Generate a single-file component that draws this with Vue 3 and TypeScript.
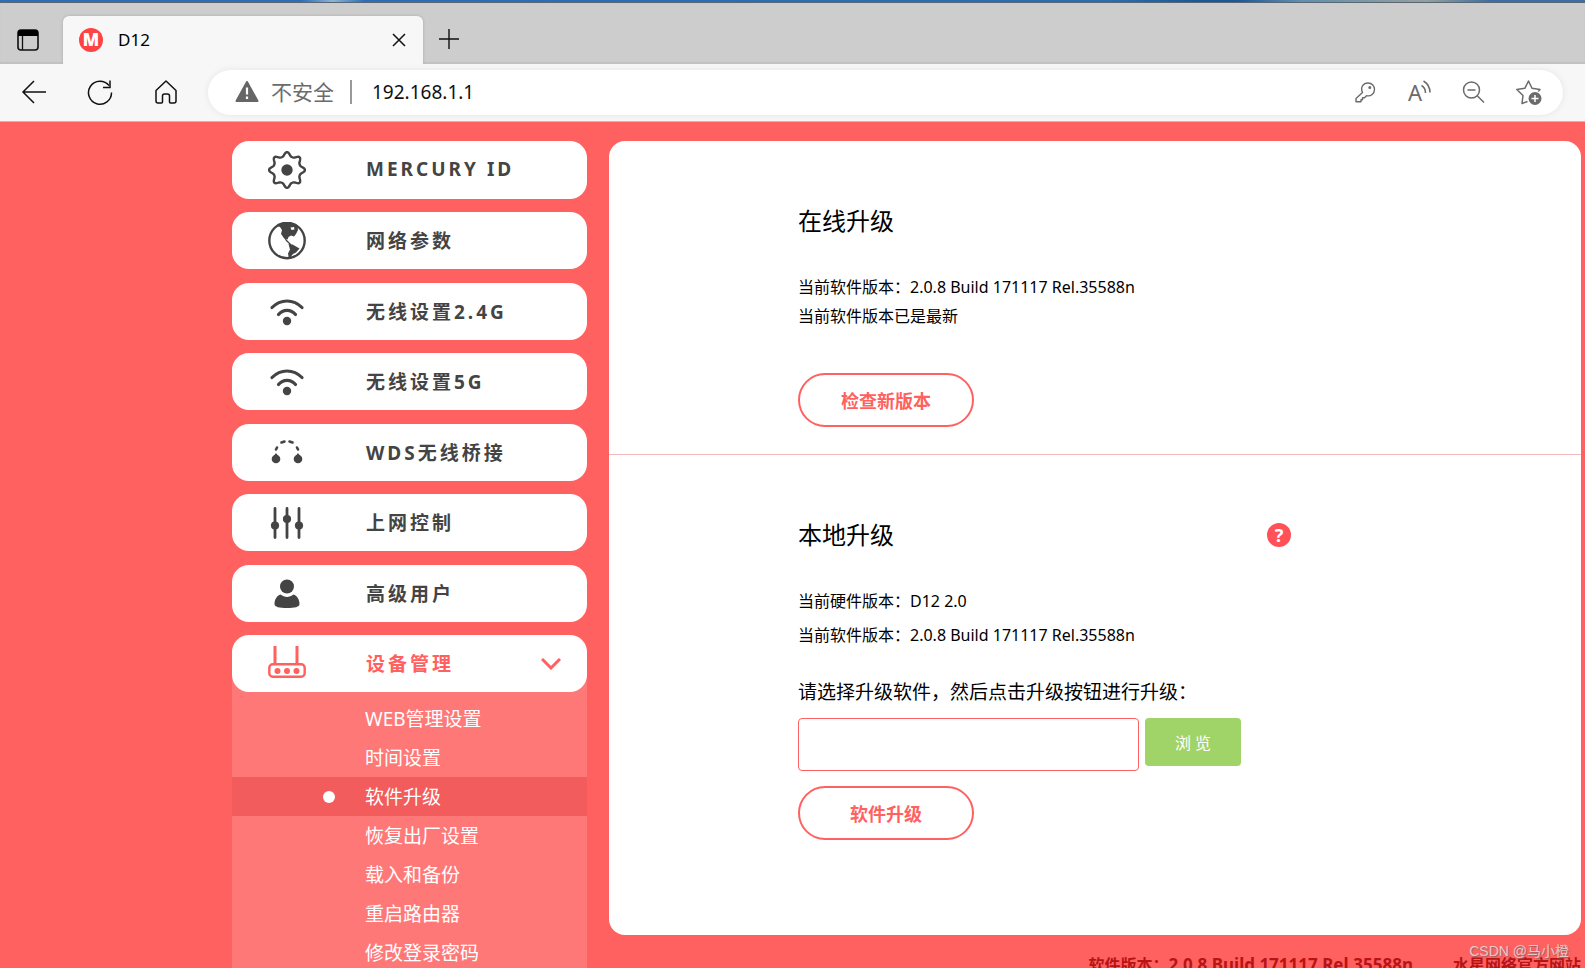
<script setup lang="ts">
import { ref } from 'vue'

type IconName = 'gear' | 'globe' | 'wifi' | 'bridge' | 'sliders' | 'user' | 'router'

interface MenuEntry {
  icon: IconName
  label: string
}

const menu: MenuEntry[] = [
  { icon: 'gear', label: 'MERCURY ID' },
  { icon: 'globe', label: '网络参数' },
  { icon: 'wifi', label: '无线设置2.4G' },
  { icon: 'wifi', label: '无线设置5G' },
  { icon: 'bridge', label: 'WDS无线桥接' },
  { icon: 'sliders', label: '上网控制' },
  { icon: 'user', label: '高级用户' },
  { icon: 'router', label: '设备管理' },
]
const activeMenu = '设备管理'

const submenu: string[] = [
  'WEB管理设置',
  '时间设置',
  '软件升级',
  '恢复出厂设置',
  '载入和备份',
  '重启路由器',
  '修改登录密码',
]
const activeSub = ref('软件升级')

const url = ref('192.168.1.1')
const filePath = ref('')
const software = '2.0.8 Build 171117 Rel.35588n'
const hardware = 'D12 2.0'

// Outline of an eight-toothed gear centred in a 38 x 38 box.
function gearPath(): string {
  const points: string[] = []
  for (let i = 0; i < 160; i++) {
    const a = (i / 160) * Math.PI * 2
    const tooth = Math.pow((1 + Math.cos(8 * a)) / 2, 1.5)
    const r = 13.8 + 4.1 * tooth
    points.push(`${(19 + r * Math.cos(a)).toFixed(2)} ${(19 + r * Math.sin(a)).toFixed(2)}`)
  }
  return `M${points.join('L')}Z`
}
const gear = gearPath()
</script>

<template>
  <div class="window">
    <div class="desktop-strip"></div>
    <header class="browser">
      <div class="tabs">
        <button class="tab-actions" type="button" aria-label="标签页操作">
          <svg width="22" height="22" viewBox="0 0 22 22">
            <rect x="1" y="1" width="20" height="20" rx="3" fill="none" stroke="#111" stroke-width="1.6" />
            <path d="M1 7V4a3 3 0 0 1 3-3h14a3 3 0 0 1 3 3v3z" fill="#000" />
            <path d="M5.5 7v14" stroke="#111" stroke-width="1.3" />
          </svg>
        </button>
        <div class="tab">
          <svg class="favicon" width="24" height="24" viewBox="0 0 24 24">
            <circle cx="12" cy="12" r="12" fill="#ff4343" />
            <text x="12" y="18" text-anchor="middle" class="favicon-text">M</text>
          </svg>
          <span class="tab-title">D12</span>
          <button class="tab-close" type="button" aria-label="关闭">
            <svg width="14" height="14" viewBox="0 0 14 14">
              <path d="M1 1l12 12M13 1L1 13" stroke="#111" stroke-width="1.5" />
            </svg>
          </button>
        </div>
        <button class="tab-new" type="button" aria-label="新建标签页">
          <svg width="22" height="22" viewBox="0 0 22 22">
            <path d="M11 1v20M1 11h20" stroke="#111" stroke-width="1.4" />
          </svg>
        </button>
      </div>
      <div class="toolbar">
        <button type="button" class="tool" aria-label="后退">
          <svg width="26" height="26" viewBox="0 0 26 26" fill="none" stroke="#111" stroke-width="1.5">
            <path d="M25 12H2M13 1L2 12l11 11" />
          </svg>
        </button>
        <button type="button" class="tool" aria-label="刷新">
          <svg width="26" height="26" viewBox="0 0 26 26" fill="none" stroke="#111" stroke-width="1.5">
            <path d="M24.500 12.500A11.500 11.500 0 1 1 22 5.500" />
            <path d="M23 0.500v7h-7" />
          </svg>
        </button>
        <button type="button" class="tool" aria-label="主页">
          <svg width="26" height="26" viewBox="0 0 26 26" fill="none" stroke="#111" stroke-width="1.5" stroke-linejoin="round">
            <path d="M3 10.500L13 1l10 9.500V21a2 2 0 0 1-2 2h-3.500a1 1 0 0 1-1-1v-6a2 2 0 0 0-2-2h-3a2 2 0 0 0-2 2v6a1 1 0 0 1-1 1H5a2 2 0 0 1-2-2z" />
          </svg>
        </button>
        <div class="address">
          <svg width="24" height="22" viewBox="0 0 24 22">
            <path d="M12 1L22.500 20H1.500z" fill="#666" stroke="#666" stroke-width="2" stroke-linejoin="round" />
            <path d="M12 6.500v7M12 15.500v2.500" stroke="#fff" stroke-width="2.200" />
          </svg>
          <span class="insecure">不安全</span>
          <span class="bar"></span>
          <input v-model="url" class="url" type="text" aria-label="地址栏" />
          <div class="address-tools">
            <button type="button" aria-label="密码">
              <svg width="24" height="26" viewBox="0 0 24 26" fill="none" stroke="#6b6b6b" stroke-width="1.400" stroke-linejoin="round">
                <path d="M8.500 13.500C6 8 9.500 4 14 4 18 4 20.500 7 20.500 10.500c0 4-3.500 7.200-8 6.200l-2 2h-2v2H7v2H2v-3.200z" />
                <circle cx="15.800" cy="8.500" r="0.800" fill="#6b6b6b" />
              </svg>
            </button>
            <button type="button" aria-label="大声朗读">
              <svg width="24" height="26" viewBox="0 0 24 26" fill="none" stroke="#6b6b6b" stroke-width="1.500">
                <text x="0" y="22" class="read-text">A</text>
                <path d="M13.500 6.500c2.500 1.500 4 4.500 4 7.500M15.500 2c4 2.500 6.500 7 6.500 11.500" />
              </svg>
            </button>
            <button type="button" aria-label="缩小">
              <svg width="24" height="26" viewBox="0 0 24 26" fill="none" stroke="#6b6b6b" stroke-width="1.500">
                <circle cx="9.500" cy="11" r="8" />
                <path d="M5.500 11h8M15.500 17l6.500 6.500" />
              </svg>
            </button>
            <button type="button" aria-label="收藏">
              <svg width="26" height="26" viewBox="0 0 26 26" fill="none" stroke="#6b6b6b" stroke-width="1.500" stroke-linejoin="round">
                <path d="M11.500 22.500l-5.500 2 1-8L0.800 10.500l8-1.200 3.700-7.300 3.500 7.300 8 1.200-1.800 2" />
                <circle cx="19" cy="19.500" r="6.500" fill="#6b6b6b" stroke="none" />
                <path d="M19 16v7M15.500 19.500h7" stroke="#fff" />
              </svg>
            </button>
          </div>
        </div>
      </div>
    </header>

    <div class="page">
      <nav class="sidebar" aria-label="主菜单">
        <ul class="menu">
          <li v-for="entry in menu" :key="entry.label">
            <button type="button" class="menu-item" :class="{ active: entry.label === activeMenu }">
              <svg width="38" height="38" viewBox="0 0 38 38" fill="none" stroke="currentColor" stroke-width="2.400" stroke-linecap="round">
                <template v-if="entry.icon === 'gear'">
                  <path :d="gear" />
                  <circle cx="19" cy="19" r="5.700" fill="currentColor" stroke="none" />
                </template>
                <template v-else-if="entry.icon === 'globe'">
                  <circle cx="19" cy="18.500" r="17.700" />
                  <path
                    d="M8 3.500C14 0 24 0 29.500 3.500L30 8l-2 4-2 2.500-3-1-2.500 1.500-1 2.500L16 16l-3-4 1-4-2-3z"
                    fill="currentColor" stroke="none"
                  />
                  <path d="M22.500 5.500l3.500-0.500 0.500 2.500-3 0.500z" fill="#fff" stroke="none" />
                  <path d="M20.500 22l4 0.500 7 4-3.500 4-3 1.500-4 5-1-5.500 2-4z" fill="currentColor" stroke="none" />
                  <path d="M15.500 14l3 4.500 4 4" stroke-width="1.300" />
                </template>
                <template v-else-if="entry.icon === 'wifi'">
                  <path d="M4 14.500C12.500 5.800 25.500 5.800 34 14.500" stroke-width="3.200" />
                  <path d="M10.500 21.500c4.500-5.500 12.500-5.500 17 0" stroke-width="3.200" />
                  <circle cx="19" cy="28" r="4.200" fill="currentColor" stroke="none" />
                </template>
                <template v-else-if="entry.icon === 'bridge'">
                  <path d="M8 15.500l1-2M13.500 8.500l3-1M21.500 7.500l3 1M29 13.500l1 2" stroke-width="2.600" />
                  <circle cx="8" cy="25" r="4.300" fill="currentColor" stroke="none" />
                  <circle cx="30" cy="25" r="4.300" fill="currentColor" stroke="none" />
                  <path d="M8 20l3 4H5zM30 20l3 4h-6z" fill="currentColor" stroke-width="1.200" />
                </template>
                <template v-else-if="entry.icon === 'sliders'">
                  <path d="M7 4.500v29M19 4.500v29M31 4.500v29" stroke-width="2.800" />
                  <circle cx="7" cy="21.500" r="4.100" fill="currentColor" stroke="none" />
                  <circle cx="19" cy="15" r="4.100" fill="currentColor" stroke="none" />
                  <circle cx="31" cy="21.500" r="4.100" fill="currentColor" stroke="none" />
                </template>
                <template v-else-if="entry.icon === 'user'">
                  <circle cx="19" cy="11.500" r="7" fill="currentColor" stroke="none" />
                  <path
                    d="M12.500 19.500c4 3.200 9 3.200 13 0 3.500 1 6 5 6 9.500 0 3-5 4-12.500 4s-12.500-1-12.500-4c0-4.500 2.500-8.500 6-9.500z"
                    fill="currentColor" stroke="none"
                  />
                </template>
                <template v-else>
                  <path d="M7 18V1M29 18V1" stroke-width="3" stroke-linecap="butt" />
                  <rect x="1.300" y="19.300" width="35.400" height="12.400" rx="3.500" />
                  <g fill="currentColor" stroke="none">
                    <circle cx="9.500" cy="26" r="3" />
                    <circle cx="19" cy="26" r="3" />
                    <circle cx="28.500" cy="26" r="3" />
                  </g>
                </template>
              </svg>
              <span class="menu-label">{{ entry.label }}</span>
              <svg v-if="entry.label === activeMenu" width="20" height="12" viewBox="0 0 20 12" fill="none" stroke="currentColor" stroke-width="3">
                <path d="M1 1l9 9 9-9" />
              </svg>
            </button>
          </li>
        </ul>
        <ul class="submenu">
          <li v-for="name in submenu" :key="name">
            <a href="#" :class="{ current: name === activeSub }" @click.prevent="activeSub = name">
              <span class="marker"></span>
              <span class="sub-label">{{ name }}</span>
            </a>
          </li>
        </ul>
      </nav>

      <div class="content">
        <main class="panel">
          <section class="online">
            <h2>在线升级</h2>
            <div class="facts">
              <p>当前软件版本：{{ software }}</p>
              <p>当前软件版本已是最新</p>
            </div>
            <button type="button" class="pill">检查新版本</button>
          </section>
          <section class="local">
            <div class="title-row">
              <h2>本地升级</h2>
              <button type="button" class="help" aria-label="帮助">?</button>
            </div>
            <div class="facts">
              <p>当前硬件版本：{{ hardware }}</p>
              <p>当前软件版本：{{ software }}</p>
            </div>
            <label class="prompt" for="firmware">请选择升级软件，然后点击升级按钮进行升级：</label>
            <div class="file-row">
              <input id="firmware" v-model="filePath" type="text" />
              <button type="button" class="browse">浏 览</button>
            </div>
            <button type="button" class="pill">软件升级</button>
          </section>
        </main>
        <footer class="footer">
          <span>软件版本：<span class="release">{{ software }}</span></span>
          <a href="#">水星网络官方网站</a>
        </footer>
      </div>
      <span class="watermark">CSDN @马小橙</span>
    </div>
  </div>
</template>

<style>
body {
  margin: 0;
}
</style>

<style scoped>
.window {
  display: flex;
  flex-direction: column;
  height: 100vh;
  overflow: hidden;
  font-family: "Noto Sans", "Noto Sans CJK SC", sans-serif;
  color: #000;
}

button {
  font-family: inherit;
  padding: 0;
  border: 0;
  background: none;
  color: inherit;
  cursor: pointer;
}

svg {
  display: block;
  flex: none;
}

ul {
  list-style: none;
  margin: 0;
  padding: 0;
}

h2,
p {
  margin: 0;
  font-weight: 400;
}

.desktop-strip {
  flex: none;
  height: 2px;
  border-bottom: 1px solid #5c6670;
  background: linear-gradient(90deg, #2a6fb8 0%, #2a6fb8 19%, #8fb3d6 21%, #2a6fb8 23%, #2b6cb0 70%, #1a5796 76%, #1a5796 78%, #5f8fb0 82%, #96a09c 90%, #3c6ea5 94%, #3c6ea5 100%);
}

.browser {
  flex: none;
}

.tabs {
  display: flex;
  align-items: center;
  height: 61px;
  background: #cdcdcd;
  box-shadow: inset 0 -2px 1px #c1c1c1;
}

.tab-actions {
  margin-left: 17px;
  margin-top: 12px;
}

.tab {
  display: flex;
  align-items: center;
  align-self: flex-end;
  box-sizing: border-box;
  width: 360px;
  height: 48px;
  margin-left: 24px;
  padding: 0 17px 0 16px;
  border-radius: 6px 6px 0 0;
  background: #f7f7f7;
  box-shadow: 0 0 3px #aaa;
  clip-path: inset(-4px -4px 0 -4px);
}

.favicon-text {
  font: 900 17px "Open Sans", sans-serif;
  fill: #fff;
}

.tab-title {
  flex: 1;
  margin-left: 15px;
  padding-bottom: 2px;
  font-size: 17px;
}

.tab-new {
  margin-left: 15px;
  margin-top: 11px;
}

.toolbar {
  display: flex;
  align-items: center;
  gap: 40px;
  height: 57px;
  padding: 0 22px 0 21px;
  border-bottom: 1px solid #bdbdbd;
  background: #f7f7f7;
}

.address {
  display: flex;
  flex: 1;
  align-items: center;
  height: 45px;
  margin: 0 0 1px -11px;
  padding: 0 21px 0 27px;
  border-radius: 23px;
  background: #fff;
  box-shadow: 0 0 6px #e4e4e4;
}

.insecure {
  margin-left: 12px;
  padding-bottom: 2px;
  font-size: 21px;
  color: #6b6b6b;
}

.bar {
  width: 2px;
  height: 24px;
  margin: 0 20px 0 16px;
  background: #999;
}

.url {
  flex: 1;
  min-width: 0;
  padding: 0;
  border: 0;
  outline: 0;
  background: none;
  font-family: inherit;
  font-size: 19px;
  color: #111;
}

.address-tools {
  display: flex;
  gap: 30px;
}

.read-text {
  font: 22px "Noto Sans", sans-serif;
  fill: #6b6b6b;
  stroke: none;
}

.page {
  position: relative;
  display: flex;
  flex: 1;
  align-items: flex-start;
  gap: 22px;
  min-height: 0;
  padding: 19px 4px 0 232px;
  overflow: hidden;
  background: #ff6161;
}

.sidebar {
  flex: none;
  width: 355px;
}

.menu {
  position: relative;
  z-index: 1;
}

.menu li {
  margin-bottom: 13px;
}

.menu li:nth-child(even) {
  margin-bottom: 14px;
}

.menu li:last-child {
  margin-bottom: 0;
}

.menu-item {
  display: flex;
  align-items: center;
  gap: 60px;
  width: 100%;
  height: 57px;
  padding: 0 26px 0 36px;
  border-radius: 17px;
  background: #fff;
  color: #444;
}

.menu li:first-child .menu-item {
  height: 58px;
}

.menu-item.active {
  color: #ff6161;
}

.menu-label {
  flex: 1;
  padding-bottom: 2px;
  font-size: 19px;
  font-weight: 700;
  letter-spacing: 3px;
  text-align: left;
  white-space: nowrap;
}

.submenu {
  margin-top: -20px;
  padding: 27px 0;
  background: #ff7878;
}

.submenu a {
  display: flex;
  align-items: center;
  gap: 30px;
  height: 39px;
  padding-left: 91px;
  font-size: 19px;
  color: #fff;
  text-decoration: none;
}

.submenu a.current {
  background: #f25c5c;
}

.sub-label {
  padding-bottom: 1px;
}

.marker {
  width: 12px;
  height: 12px;
  border-radius: 50%;
}

.current .marker {
  background: #fff;
}

.content {
  flex: 1;
  min-width: 0;
}

.panel {
  border-radius: 16px;
  background: #fff;
}

.online {
  padding: 64px 189px 27px;
  border-bottom: 1px solid #f5baba;
}

.local {
  padding: 64px 189px 95px;
}

h2 {
  font-size: 24px;
  line-height: 32px;
}

.facts {
  font-size: 16px;
}

.online .facts {
  margin: 36px 0 42px;
  line-height: 29px;
}

.local .facts {
  margin: 33px 0 26px;
  line-height: 34px;
}

.pill {
  display: block;
  width: 176px;
  height: 54px;
  border: 2px solid #ff6161;
  border-radius: 27px;
  font-size: 18px;
  font-weight: 700;
  color: #ff6161;
}

.title-row {
  display: flex;
  align-items: center;
  justify-content: space-between;
  max-width: 493px;
}

.help {
  width: 24px;
  height: 24px;
  border-radius: 50%;
  background: #ff5157;
  color: #fff;
  font-size: 18px;
  font-weight: 700;
  line-height: 24px;
}

.prompt {
  display: block;
  font-size: 19px;
  line-height: 28px;
}

.file-row {
  display: flex;
  align-items: flex-start;
  gap: 6px;
  margin: 12px 0 15px;
}

.file-row input {
  box-sizing: border-box;
  width: 341px;
  height: 53px;
  padding: 0 12px;
  border: 1px solid #ff6161;
  border-radius: 4px;
  outline: 0;
  font-family: inherit;
  font-size: 16px;
}

.browse {
  width: 96px;
  height: 48px;
  border-radius: 4px;
  background: #a0d468;
  color: #fff;
  font-size: 16px;
}

.footer {
  display: flex;
  justify-content: flex-end;
  gap: 40px;
  margin-top: 18px;
  font-size: 16px;
  font-weight: 700;
  line-height: 24px;
  color: #b81414;
  white-space: nowrap;
}

.release {
  font-size: 17px;
}

.footer a {
  color: inherit;
  text-decoration: none;
}

.watermark {
  position: absolute;
  right: 16px;
  bottom: 7px;
  font: 14px/20px "Liberation Sans", "Noto Sans CJK SC", sans-serif;
  color: #e6c8c8;
  text-shadow: 1px 1px 1px #a06060;
}
</style>
